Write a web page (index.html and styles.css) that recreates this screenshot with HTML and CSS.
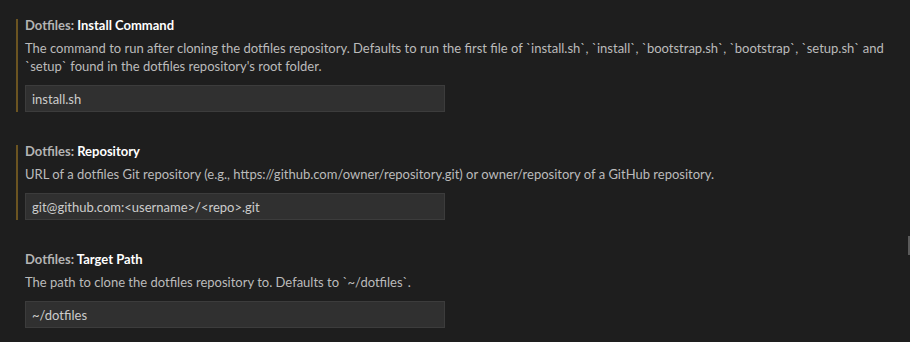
FILE: index.html
```html
<!DOCTYPE html>
<html>
<head>
<meta charset="utf-8">
<link rel="stylesheet" href="styles.css">
</head>
<body>
<div class="settings">
  <div class="setting modified">
    <div class="title"><span class="category">Dotfiles: </span><span class="label">Install Command</span></div>
    <div class="desc">The command to run after cloning the dotfiles repository. Defaults to run the first file of `install.sh`, `install`, `bootstrap.sh`, `bootstrap`, `setup.sh` and `setup` found in the dotfiles repository's root folder.</div>
    <input class="field" type="text" value="install.sh">
  </div>
  <div class="setting modified">
    <div class="title"><span class="category">Dotfiles: </span><span class="label">Repository</span></div>
    <div class="desc">URL of a dotfiles Git repository (e.g., https://github.com/owner/repository.git) or owner/repository of a GitHub repository.</div>
    <input class="field" type="text" value="git@github.com:&lt;username&gt;/&lt;repo&gt;.git">
  </div>
  <div class="setting">
    <div class="title"><span class="category">Dotfiles: </span><span class="label">Target Path</span></div>
    <div class="desc">The path to clone the dotfiles repository to. Defaults to `~/dotfiles`.</div>
    <input class="field" type="text" value="~/dotfiles">
  </div>
</div>
<div class="scroll-marker"></div>
</body>
</html>
```

FILE: styles.css
```css
html, body {
  margin: 0;
  padding: 0;
  background: #1e1e1e;
  height: 100%;
  overflow: hidden;
}
body {
  font-family: Lato, "Noto Sans", sans-serif;
  font-size: 13px;
  color: #bbbbbb;
}
.settings {
  display: flex;
  flex-direction: column;
  gap: 33px;
  padding-top: 19px;
  padding-left: 16px;
  padding-right: 22px;
}
.setting {
  display: flex;
  flex-direction: column;
  align-items: flex-start;
  border-left: 2px solid transparent;
  padding-left: 7px;
}
.setting.modified {
  border-left-color: #6b5421;
}
.title {
  line-height: 18px;
  margin-top: -3px;
  font-weight: 700;
  white-space: nowrap;
}
.category {
  color: #b4b4b4;
}
.label {
  color: #ffffff;
}
.desc {
  margin-top: 5px;
  line-height: 18px;
  color: #bbbbbb;
}
.field {
  margin: 10px 0 0 0;
  box-sizing: border-box;
  width: 420px;
  height: 27px;
  padding: 0 6px;
  background: #303030;
  border: 1px solid #3c3c3c;
  color: #cccccc;
  font-family: Lato, "Noto Sans", sans-serif;
  font-size: 13px;
  outline: none;
}
.scroll-marker {
  position: absolute;
  right: 0;
  top: 236px;
  width: 2px;
  height: 19px;
  background: #5a5a5a;
}
```
